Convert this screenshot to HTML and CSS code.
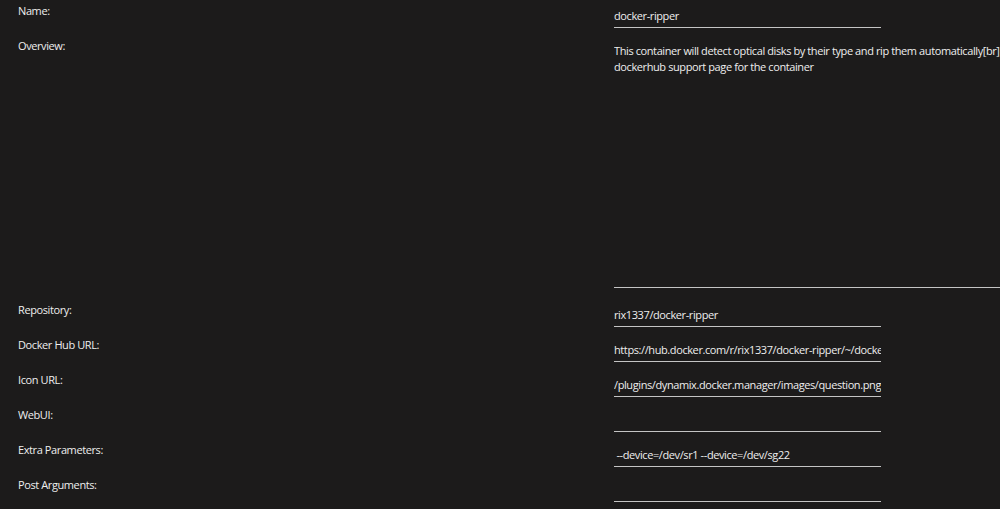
FILE: index.html
```html
<!DOCTYPE html>
<html>
<head>
    <meta name='viewport' content='width=device-width, initial-scale=1.0'>
    <title>Update Container</title>
    <link rel="stylesheet" href="styles.css">
</head>
<body>
    <div class='form'>
        <div class='row'>
            <label class='label'>Name:</label>
            <input class='field' type='text' value='docker-ripper'>
        </div>
        <div class='row tall'>
            <label class='label'>Overview:</label>
            <textarea class='field overview' readonly>This container will detect optical disks by their type and rip them automatically[br] See the
dockerhub support page for the container</textarea>
        </div>
        <div class='row'>
            <label class='label'>Repository:</label>
            <input class='field' type='text' value='rix1337/docker-ripper'>
        </div>
        <div class='row'>
            <label class='label'>Docker Hub URL:</label>
            <input class='field' type='text' value='https://hub.docker.com/r/rix1337/docker-ripper/~/dockerfile/'>
        </div>
        <div class='row'>
            <label class='label'>Icon URL:</label>
            <input class='field' type='text' value='/plugins/dynamix.docker.manager/images/question.png'>
        </div>
        <div class='row'>
            <label class='label'>WebUI:</label>
            <input class='field' type='text' value=''>
        </div>
        <div class='row'>
            <label class='label'>Extra Parameters:</label>
            <input class='field' type='text' value=' --device=/dev/sr1 --device=/dev/sg22'>
        </div>
        <div class='row'>
            <label class='label'>Post Arguments:</label>
            <input class='field' type='text' value=''>
        </div>
    </div>
</body>
</html>
```

FILE: styles.css
```css
html, body {
    overflow: hidden;
}
body {
    font-family: "Open Sans", "Noto Sans", sans-serif;
    font-size: 11px;
    letter-spacing: -0.4px;
    margin: 0;
    padding: 2px 0 0 18px;
    background-color: #1c1b1b;
    color: #eeeeee;
}
.row {
    display: grid;
    grid-template-columns: 596px 1fr;
    align-items: start;
    height: 35px;
}
.row.tall {
    height: 264px;
}
.label {
    line-height: 16px;
    padding-top: 1px;
}
.field {
    font-family: inherit;
    font-size: 11px;
    letter-spacing: -0.4px;
    color: #eeeeee;
    background: transparent;
    border: none;
    border-bottom: 1px solid #c4c4c4;
    outline: none;
    padding: 5px 0 4px 0;
    margin: 0;
    width: 267px;
    height: 26px;
    box-sizing: border-box;
    line-height: 16px;
}
.overview {
    width: 386px;
    height: 251px;
    resize: none;
    overflow: hidden;
    white-space: pre;
    padding-top: 6px;
}
```
